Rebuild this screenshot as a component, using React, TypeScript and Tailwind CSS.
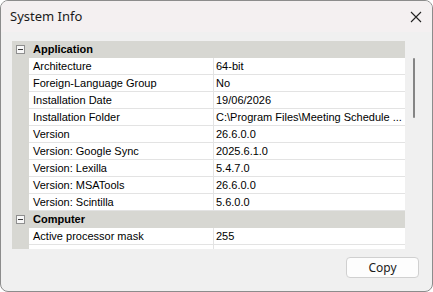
import { Fragment } from "react"

type Row = { name: string; value: string }
type Section = { title: string; rows: Row[] }

const sections: Section[] = [
  {
    title: "Application",
    rows: [
      { name: "Architecture", value: "64-bit" },
      { name: "Foreign-Language Group", value: "No" },
      { name: "Installation Date", value: "19/06/2026" },
      { name: "Installation Folder", value: "C:\\Program Files\\Meeting Schedule ..." },
      { name: "Version", value: "26.6.0.0" },
      { name: "Version: Google Sync", value: "2025.6.1.0" },
      { name: "Version: Lexilla", value: "5.4.7.0" },
      { name: "Version: MSATools", value: "26.6.0.0" },
      { name: "Version: Scintilla", value: "5.6.0.0" },
    ],
  },
  {
    title: "Computer",
    rows: [
      { name: "Active processor mask", value: "255" },
      { name: "System RAM", value: "63.95 GB" },
    ],
  },
]

function MinusBox() {
  return (
    <span className="flex h-[9px] w-[9px] items-center justify-center border border-[#8f8f8f] bg-[#f7f7f7]">
      <span className="h-px w-[5px] bg-[#3a3a3a]" />
    </span>
  )
}

export default function App() {
  return (
    <div className="flex h-[292px] w-[433px] flex-col overflow-hidden rounded-[8px] border border-[#8c8c8c] bg-[#f0f0f0] font-['Liberation_Sans',sans-serif]">
      <div className="flex h-[31px] shrink-0 items-center justify-between bg-[#f4f0f1] pl-[9px] pr-[9px]">
        <span className="font-['Noto_Sans',sans-serif] text-[13px] text-[#1a1a1a]">System Info</span>
        <svg width="12" height="12" viewBox="0 0 12 12" className="mr-[1px]">
          <path d="M1 1L11 11M11 1L1 11" stroke="#222" strokeWidth="1.1" />
        </svg>
      </div>

      <div className="flex flex-1 flex-col pl-[11px] pt-[9px]">
        <div className="flex h-[208px] w-[408px] overflow-hidden">
          <div className="w-[393px] text-[11px] text-black">
            {sections.map((s) => (
              <Fragment key={s.title}>
                <div className="flex h-[17px] items-center bg-[#d7d7d2]">
                  <div className="flex w-[17px] justify-center">
                    <MinusBox />
                  </div>
                  <span className="pl-[4px] font-bold">{s.title}</span>
                </div>
                {s.rows.map((r) => (
                  <div key={r.name} className="flex h-[17px]">
                    <div className="w-[17px] shrink-0 bg-[#d7d7d2]" />
                    <div className="flex w-[185px] shrink-0 items-center border-b border-r border-[#e3e3e3] bg-white pl-[4px]">
                      {r.name}
                    </div>
                    <div className="flex flex-1 items-center overflow-hidden whitespace-nowrap border-b border-[#e3e3e3] bg-white pl-[2px]">
                      {r.value}
                    </div>
                  </div>
                ))}
              </Fragment>
            ))}
          </div>
          <div className="flex w-[15px] justify-center pt-[17px]">
            <div className="ml-[2px] h-[60px] w-[2px] rounded-full bg-[#858585]" />
          </div>
        </div>

        <div className="flex flex-1 items-start justify-end pr-[13px] pt-[8px]">
          <button className="h-[21px] w-[73px] rounded-[4px] border border-[#d0d0d0] bg-[#fdfdfd] font-['Noto_Sans',sans-serif] text-[12px] text-[#1a1a1a]">
            Copy
          </button>
        </div>
      </div>
    </div>
  )
}
